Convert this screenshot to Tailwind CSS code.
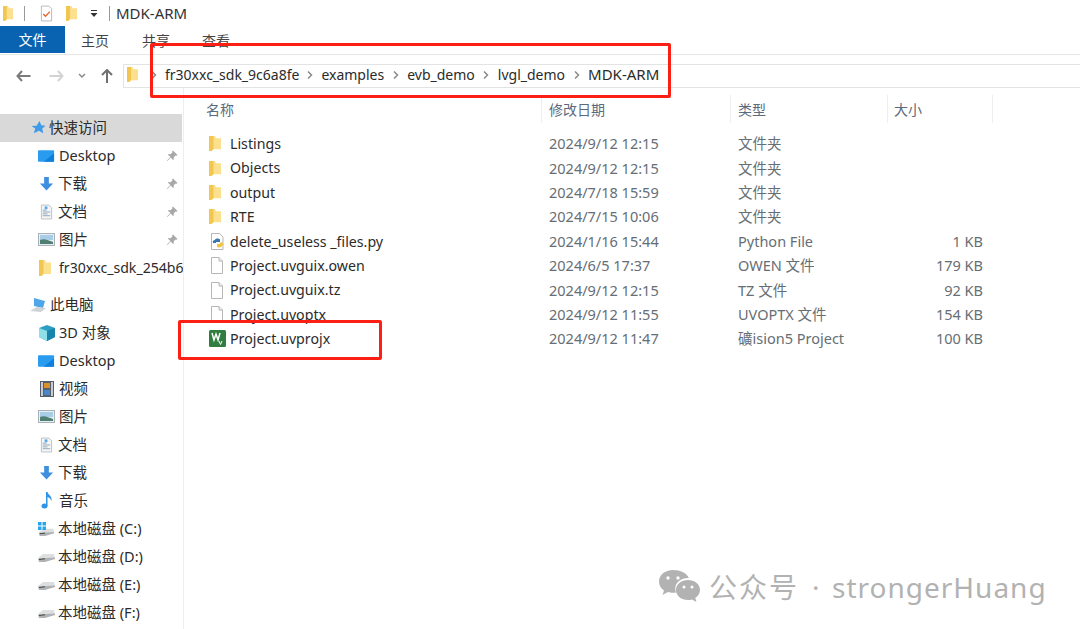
<!DOCTYPE html>
<html><head><meta charset="utf-8">
<script src="https://cdn.jsdelivr.net/npm/@tailwindcss/browser@4"></script>
</head>
<body class="bg-white">
<div class="relative w-[1080px] h-[629px] overflow-hidden bg-white text-[14.5px] text-[#2b2b2b] font-['Noto_Sans','Noto_Sans_CJK_SC',sans-serif]">
  <svg class="hidden"><defs>
    <symbol id="folder" viewBox="0 0 12 16" preserveAspectRatio="none"><path d="M0 0h6l1 2.500h5V14H3.500L2.500 16H0z" fill="#fbe08e"/><path d="M0 0h4.500v14L2.500 16H0z" fill="#f3c652"/></symbol>
    <symbol id="desk" viewBox="0 0 18 14"><rect x="0" y="1" width="17" height="12" rx="1" fill="#2a9cf0"/><path d="M6 13 17 4v9z" fill="#0f7fdc"/></symbol>
    <symbol id="down" viewBox="0 0 16 16"><path d="M5.500 0.500h5v7h4.500L8 15 1 7.500h4.500z" fill="#3f8fe0"/></symbol>
    <symbol id="doc" viewBox="0 0 14 16"><path d="M1.500.5h8l3 3v12h-11z" fill="#f4f6f8" stroke="#b9bec4"/><path d="M3 6h4M3 8h8M3 10h5M3 12h8" stroke="#8fa3b5"/><rect x="5" y="2" width="3" height="3" fill="#5aa9e6"/></symbol>
    <symbol id="pic" viewBox="0 0 17 13"><rect x=".5" y=".5" width="16" height="12" fill="#e8eef2" stroke="#a9b2b8"/><rect x="2" y="2" width="13" height="5" fill="#a8cde6"/><path d="M2 7c4-2 8 0 13 2v2H2z" fill="#4e7f70"/></symbol>
    <symbol id="pin" viewBox="0 0 12 12"><path d="M7 .5 11.500 5l-1 .8-1-.3L7.600 7.500 7.800 9.500 7 10 4.700 7.500 1.500 11l-.5-.5L4.400 7 2 4.800l.5-.8 2 .2L6.500 2.300 6.200 1.300z" fill="#a6a8aa"/></symbol>
    <symbol id="disk" viewBox="0 0 17 10"><path d="M0 6 5 2l11 0 1 4-10 3.500z" fill="#dcdedf"/><path d="M0 6.500 8 6l9-.5V7L7 10H1z" fill="#b0b3b5"/><path d="M1 7.500 7 6.800" stroke="#444" stroke-width="1.100"/></symbol>
    <symbol id="blank" viewBox="0 0 14 17"><path d="M1.500.5h7.500l3.500 3.500v12.500h-11z" fill="#fff" stroke="#b4b6b8"/><path d="M9 .5v3.500h3.500" fill="#eee" stroke="#b4b6b8"/></symbol>
    <symbol id="chev" viewBox="0 0 6 8"><path d="M1 .5 4.500 4 1 7.500" fill="none" stroke="#8a8a8a" stroke-width="1.500"/></symbol>
  </defs></svg>

  <!-- title bar -->
  <div class="h-[26px] flex items-center pl-[3px]">
    <svg class="w-[10px] h-[15px] shrink-0"><use href="#folder"/></svg>
    <div class="w-px h-[15px] bg-[#9a9a9a] ml-[11px]"></div>
    <svg class="w-[13px] h-[17px] ml-[15px]" viewBox="0 0 14 17"><path d="M1.500.5h8l3 3v13h-11z" fill="#fff" stroke="#b4b6b8"/><path d="M3.500 9l2.500 2.500 4.500-5" fill="none" stroke="#e9622c" stroke-width="1.400"/></svg>
    <svg class="w-[11px] h-[15px] ml-[13px] shrink-0"><use href="#folder"/></svg>
    <svg class="w-[8px] h-[7px] ml-[13px]" viewBox="0 0 8 7"><path d="M1 0h6v1H1zM.5 3h7L4 7z" fill="#333"/></svg>
    <div class="w-px h-[15px] bg-[#9a9a9a] ml-[11px]"></div>
    <span class="ml-[6px] text-[15px] text-[#333]">MDK-ARM</span>
  </div>
  <!-- ribbon tabs -->
  <div class="h-[29px] flex items-start border-b border-[#e6e6e6] text-[14px] text-[#444]">
    <div class="w-[65px] h-[27px] bg-[#0a63b0] text-white flex items-center justify-center">文件</div>
    <span class="ml-[16px] mt-[4px]">主页</span>
    <span class="ml-[33px] mt-[4px]">共享</span>
    <span class="ml-[32px] mt-[4px]">查看</span>
  </div>
  <!-- address row -->
  <div class="h-[33px] flex items-center pt-[8px]">
    <svg class="w-[15px] h-[12px] ml-[16px]" viewBox="0 0 15 12"><path d="M6 1 1.500 6 6 11M2 6h12.500" fill="none" stroke="#7b7b7b" stroke-width="2"/></svg>
    <svg class="w-[15px] h-[12px] ml-[18px]" viewBox="0 0 15 12"><path d="M9 1l4.500 5L9 11M13 6H.5" fill="none" stroke="#d2d2d2" stroke-width="2"/></svg>
    <svg class="w-[8px] h-[6px] ml-[14px]" viewBox="0 0 8 6"><path d="M1 1l3 3 3-3" fill="none" stroke="#8a8a8a" stroke-width="1.500"/></svg>
    <svg class="w-[12px] h-[14px] ml-[15px]" viewBox="0 0 12 14"><path d="M1 6l5-5 5 5M6 1.500V14" fill="none" stroke="#707070" stroke-width="2"/></svg>
    <div class="ml-[10px] flex-1 h-[24px] border border-[#e3e3e3] border-r-0 flex items-center pl-[3px] pb-[2px] text-[14px]">
      <svg class="w-[11px] h-[15px] shrink-0"><use href="#folder"/></svg>
      <svg class="w-[6px] h-[8px] ml-[13px] mr-[8px]"><use href="#chev"/></svg>
      <span>fr30xxc_sdk_9c6a8fe</span>
      <svg class="w-[6px] h-[8px] mx-[8px]"><use href="#chev"/></svg>
      <span>examples</span>
      <svg class="w-[6px] h-[8px] mx-[8.5px]"><use href="#chev"/></svg>
      <span>evb_demo</span>
      <svg class="w-[6px] h-[8px] mx-[8.5px]"><use href="#chev"/></svg>
      <span>lvgl_demo</span>
      <svg class="w-[6px] h-[8px] mx-[8.5px]"><use href="#chev"/></svg>
      <span class="text-[15px]">MDK-ARM</span>
    </div>
  </div>

  <!-- body -->
  <div class="flex h-[541px]">
    <!-- sidebar -->
    <aside class="w-[184px] shrink-0 border-r border-[#eeeeee] pt-[26px] overflow-hidden whitespace-nowrap">
      <div class="h-[27.5px] w-[182px] bg-[#d9d9d9] flex items-center pl-[31px] gap-[3px]"><svg class="w-[15px] h-[15px]" viewBox="0 0 16 16"><path d="M9 1l2 4.500 4.500.5-3.500 3 1 5-4.500-2.500L3 14l1.500-5L.5 6.500 6 6z" fill="#3f9be8"/></svg>快速访问</div>
      <div class="h-[28px] flex items-center pl-[38px] gap-[4px]"><svg class="w-[17px] h-[14px]"><use href="#desk"/></svg><span class="flex-1">Desktop</span><svg class="w-[12px] h-[12px] mr-[5px]"><use href="#pin"/></svg></div>
      <div class="h-[28px] flex items-center pl-[39px] gap-[4px]"><svg class="w-[15px] h-[16px]"><use href="#down"/></svg><span class="flex-1">下载</span><svg class="w-[12px] h-[12px] mr-[5px]"><use href="#pin"/></svg></div>
      <div class="h-[28px] flex items-center pl-[40px] gap-[5px]"><svg class="w-[13px] h-[16px]"><use href="#doc"/></svg><span class="flex-1">文档</span><svg class="w-[12px] h-[12px] mr-[5px]"><use href="#pin"/></svg></div>
      <div class="h-[28px] flex items-center pl-[38px] gap-[4px]"><svg class="w-[17px] h-[13px]"><use href="#pic"/></svg><span class="flex-1">图片</span><svg class="w-[12px] h-[12px] mr-[5px]"><use href="#pin"/></svg></div>
      <div class="h-[28px] flex items-center pl-[39px] gap-[8px]"><svg class="w-[12px] h-[16px] shrink-0"><use href="#folder"/></svg><span class="text-[14.1px]">fr30xxc_sdk_254b6</span></div>
      <div class="h-[9px]"></div>
      <div class="h-[28px] flex items-center pl-[29px] gap-[3px]"><svg class="w-[18px] h-[16px]" viewBox="0 0 18 16"><path d="M5 1l11 3-2 7-9-2z" fill="#4fa6e8"/><path d="M1 14l7-4 9 1-5 4z" fill="#cfd3d6"/></svg>此电脑</div>
      <div class="h-[28px] flex items-center pl-[39px] gap-[4px]"><svg class="w-[16px] h-[16px]" viewBox="0 0 16 16"><path d="M8 0l8 3v9l-8 4-8-4V3z" fill="#2e9fc4"/><path d="M0 3l8 3v10l-8-4z" fill="#8fdfe8"/><path d="M8 6l8-3v9l-8 4z" fill="#1784ab"/></svg>3D 对象</div>
      <div class="h-[28px] flex items-center pl-[38px] gap-[4px]"><svg class="w-[17px] h-[14px]"><use href="#desk"/></svg>Desktop</div>
      <div class="h-[28px] flex items-center pl-[40px] gap-[5px]"><svg class="w-[14px] h-[16px]" viewBox="0 0 14 16"><rect width="14" height="16" fill="#55606e"/><path d="M1 1h2v14H1zM11 1h2v14h-2z" fill="#c8ccd0"/><rect x="4" y="2" width="6" height="5" fill="#d9902c"/><rect x="4" y="9" width="6" height="5" fill="#4a86c8"/></svg>视频</div>
      <div class="h-[28px] flex items-center pl-[38px] gap-[4px]"><svg class="w-[17px] h-[13px]"><use href="#pic"/></svg>图片</div>
      <div class="h-[28px] flex items-center pl-[40px] gap-[5px]"><svg class="w-[13px] h-[16px]"><use href="#doc"/></svg>文档</div>
      <div class="h-[28px] flex items-center pl-[39px] gap-[4px]"><svg class="w-[15px] h-[16px]"><use href="#down"/></svg>下载</div>
      <div class="h-[28px] flex items-center pl-[41px] gap-[6px]"><svg class="w-[12px] h-[17px]" viewBox="0 0 12 17"><ellipse cx="3.500" cy="14" rx="3" ry="2.500" fill="#2f93e6"/><path d="M5 14V0h1.500c.5 3 5 4 4 9-1-2.500-2.500-3.500-4-4v9z" fill="#2f93e6"/></svg>音乐</div>
      <div class="h-[28px] flex items-center pl-[38px] gap-[3px]"><span class="relative w-[17px] h-[14px]"><svg class="absolute left-0 bottom-0 w-[17px] h-[9px]"><use href="#disk"/></svg><svg class="absolute left-0 top-0 w-[8px] h-[8px]" viewBox="0 0 8 8"><path d="M0 0h3.500v3.500H0zM4.500 0H8v3.500H4.500zM0 4.500h3.500V8H0zM4.500 4.500H8V8H4.500z" fill="#29a4ec"/></svg></span>本地磁盘 (C:)</div>
      <div class="h-[28px] flex items-center pl-[38px] gap-[3px]"><svg class="w-[17px] h-[10px]"><use href="#disk"/></svg>本地磁盘 (D:)</div>
      <div class="h-[28px] flex items-center pl-[38px] gap-[3px]"><svg class="w-[17px] h-[10px]"><use href="#disk"/></svg>本地磁盘 (E:)</div>
      <div class="h-[28px] flex items-center pl-[38px] gap-[3px]"><svg class="w-[17px] h-[10px]"><use href="#disk"/></svg>本地磁盘 (F:)</div>
    </aside>

    <!-- file list -->
    <main class="flex-1 text-[#666e75]">
      <div class="h-[44px] pt-[7px] pl-[22px] flex text-[14px] text-[#5b6b7b]">
        <div class="w-[336px] h-[28px] border-r border-[#eeeeee] flex items-center">名称</div>
        <div class="w-[189px] h-[28px] border-r border-[#eeeeee] flex items-center pl-[7px]">修改日期</div>
        <div class="w-[157px] h-[28px] border-r border-[#eeeeee] flex items-center pl-[7px]">类型</div>
        <div class="w-[105px] h-[28px] border-r border-[#eeeeee] flex items-center pl-[6px]">大小</div>
      </div>
      <div class="grid grid-cols-[365px_189px_150px_95px] auto-rows-[24.4px] items-center whitespace-nowrap">
        <div class="flex items-center pl-[25px] pb-px gap-[9px] text-[#2b2b2b] text-[14.2px]"><svg class="w-[12px] h-[15px] shrink-0"><use href="#folder"/></svg>Listings</div><div>2024/9/12 12:15</div><div>文件夹</div><div></div>
        <div class="flex items-center pl-[25px] pb-px gap-[9px] text-[#2b2b2b] text-[14.2px]"><svg class="w-[12px] h-[15px] shrink-0"><use href="#folder"/></svg>Objects</div><div>2024/9/12 12:15</div><div>文件夹</div><div></div>
        <div class="flex items-center pl-[25px] pb-px gap-[9px] text-[#2b2b2b] text-[14.2px]"><svg class="w-[12px] h-[15px] shrink-0"><use href="#folder"/></svg>output</div><div>2024/7/18 15:59</div><div>文件夹</div><div></div>
        <div class="flex items-center pl-[25px] pb-px gap-[9px] text-[#2b2b2b] text-[14.2px]"><svg class="w-[12px] h-[15px] shrink-0"><use href="#folder"/></svg>RTE</div><div>2024/7/15 10:06</div><div>文件夹</div><div></div>
        <div class="flex items-center pl-[26px] pb-px gap-[6px] text-[#2b2b2b] text-[14.2px]"><svg class="w-[14px] h-[17px]" viewBox="0 0 14 17"><path d="M1.500.5h8l3.500 3.500v12.500H1.500z" fill="#fff" stroke="#b4b6b8"/><path d="M5 7c0-2 5-2 5 0v2H6v1H3c-1-3 2-3 2-3z" fill="#3a76b0"/><path d="M10 10c0 1-1 1-1 1H7v3c2 1 6 0 6-3 0-2-2-2-3-1z" fill="#f2c33a"/></svg>delete_useless _files.py</div><div>2024/1/16 15:44</div><div>Python File</div><div class="text-right">1 KB</div>
        <div class="flex items-center pl-[26px] pb-px gap-[6px] text-[#2b2b2b] text-[14.2px]"><svg class="w-[14px] h-[17px]"><use href="#blank"/></svg>Project.uvguix.owen</div><div>2024/6/5 17:37</div><div>OWEN 文件</div><div class="text-right">179 KB</div>
        <div class="flex items-center pl-[26px] pb-px gap-[6px] text-[#2b2b2b] text-[14.2px]"><svg class="w-[14px] h-[17px]"><use href="#blank"/></svg>Project.uvguix.tz</div><div>2024/9/12 12:15</div><div>TZ 文件</div><div class="text-right">92 KB</div>
        <div class="flex items-center pl-[26px] pb-px gap-[6px] text-[#2b2b2b] text-[14.2px]"><svg class="w-[14px] h-[17px]"><use href="#blank"/></svg>Project.uvoptx</div><div>2024/9/12 11:55</div><div>UVOPTX 文件</div><div class="text-right">154 KB</div>
        <div class="flex items-center pl-[25px] pb-px gap-[4px] text-[#2b2b2b] text-[14.2px]"><svg class="w-[17px] h-[17px]" viewBox="0 0 17 17"><rect width="17" height="17" rx="1.500" fill="#2f7d3f"/><path d="M3 3l2 7 2-6 2 6 2-7" fill="none" stroke="#fff" stroke-width="1.500"/><path d="M10 11l1.500 3.500L13 11" fill="none" stroke="#fff"/></svg>Project.uvprojx</div><div>2024/9/12 11:47</div><div>礦ision5 Project</div><div class="text-right">100 KB</div>
      </div>
    </main>
  </div>

  <!-- red annotation boxes -->
  <div class="absolute left-[150px] top-[43px] w-[521px] h-[55px] border-[3px] border-[#fb1f14] rounded-[2px]"></div>
  <div class="absolute left-[178px] top-[320px] w-[204px] h-[40px] border-[3px] border-[#fb1f14] rounded-[2px]"></div>

  <!-- watermark -->
  <div class="absolute left-[658px] top-[566px] flex items-center text-[#b2b2b2] text-[28px] whitespace-nowrap">
    <svg class="w-[43px] h-[36px]" viewBox="0 0 43 36"><path d="M15 1C7 1 1 6 1 12.500c0 4 2 7 5 9l-1.500 4.500 5.500-3c1.500.5 3 .7 5 .7 1 0 2 0 3-.2-.5-1.500-.7-2.500-.7-4 0-6 6-10.500 12.500-10.500h1C29 4 22.500 1 15 1z" fill="#b2b2b2"/><path d="M42 21c0-6-5.500-10-12-10s-12 4-12 10 5.500 10 12 10c1.500 0 2.800-.2 4-.6l4.500 2.600-1.200-4c3-2 4.700-4.800 4.700-8z" fill="#b2b2b2"/><circle cx="10" cy="9" r="1.700" fill="#fff"/><circle cx="20" cy="9" r="1.700" fill="#fff"/><circle cx="26" cy="18" r="1.500" fill="#fff"/><circle cx="34" cy="18" r="1.500" fill="#fff"/></svg>
    <span class="ml-[8px] tracking-[2px]">公众号</span>
    <span class="ml-[13px] w-[20px]">·</span>
    <span class="tracking-[1px]">strongerHuang</span>
  </div>
</div>
</body></html>
